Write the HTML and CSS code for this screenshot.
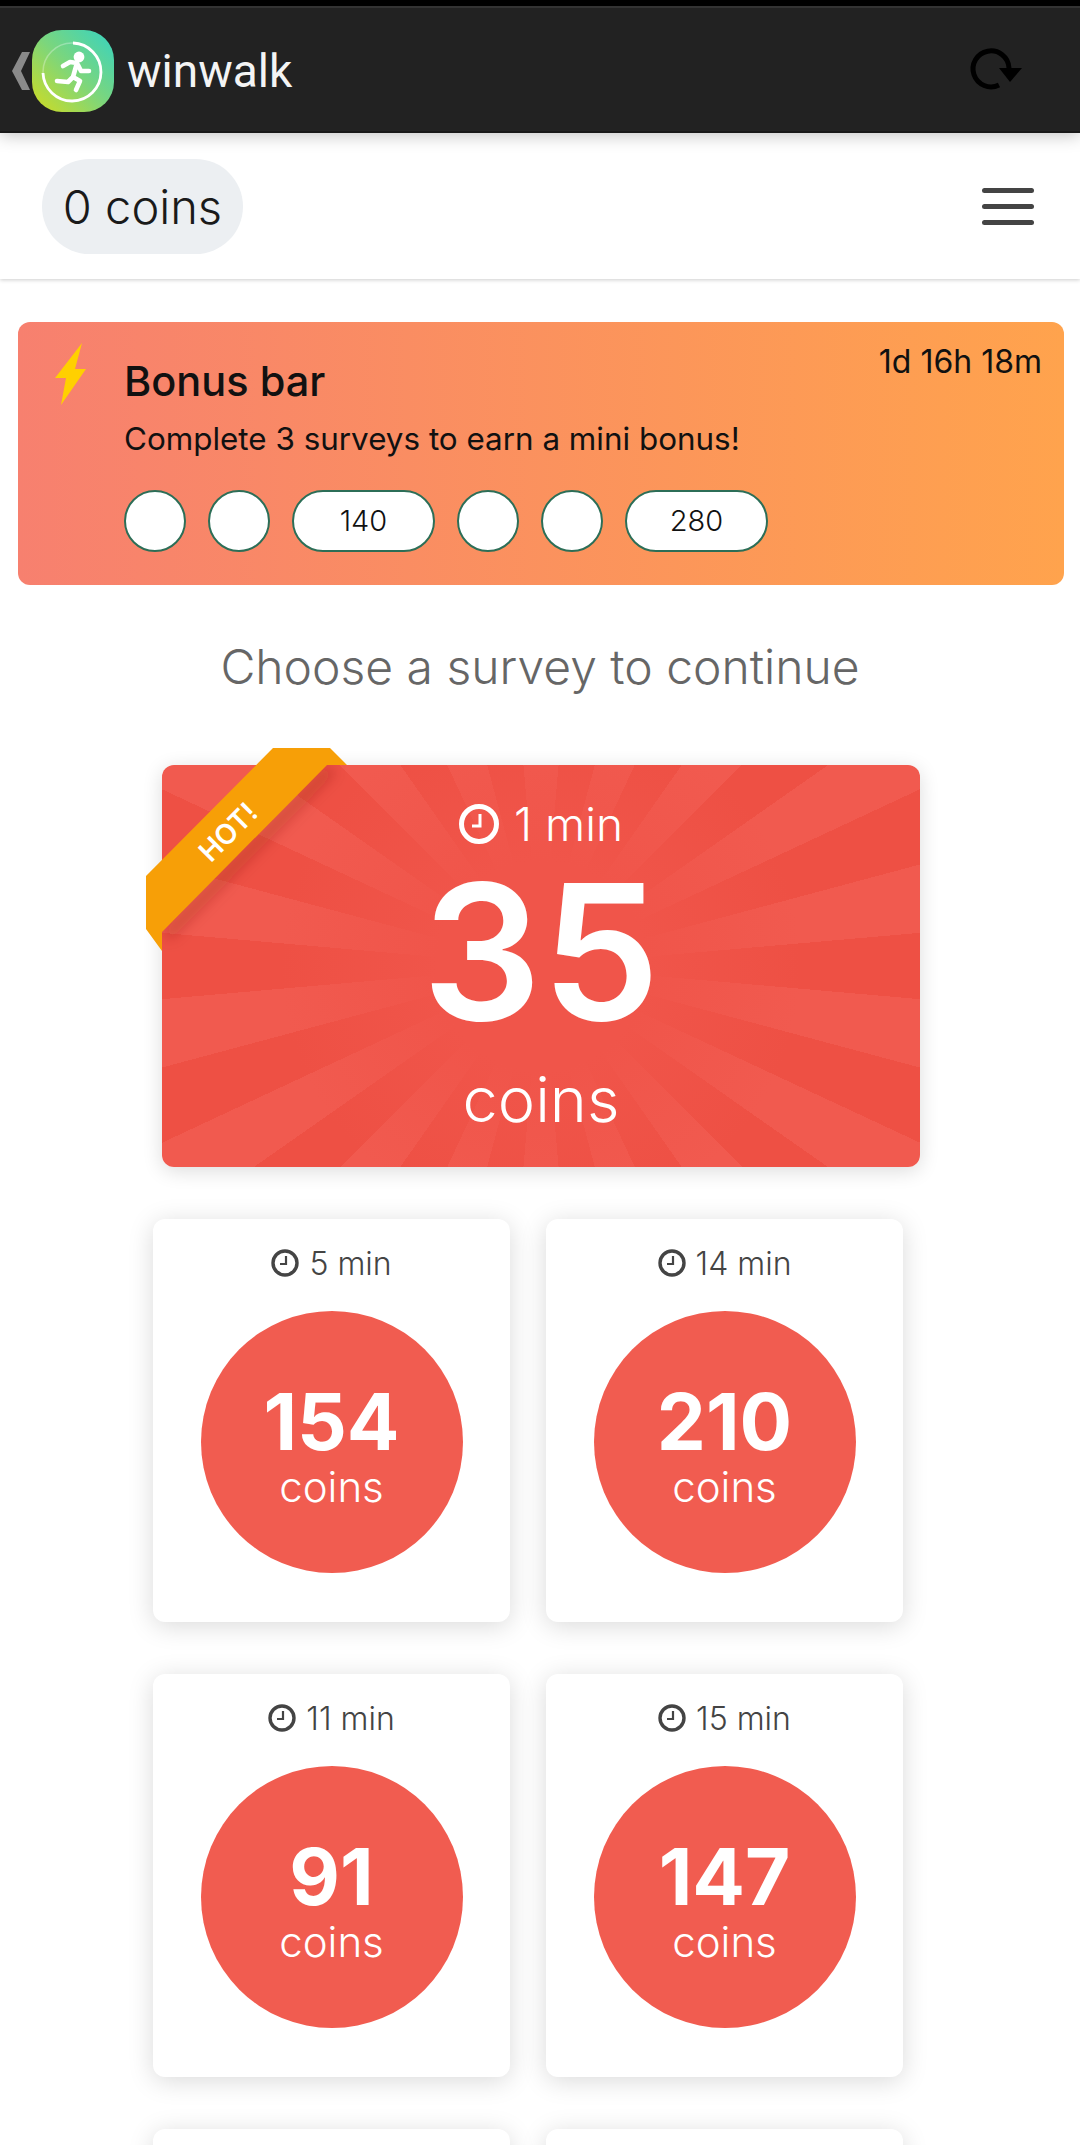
FILE: index.html
```html
<!DOCTYPE html>
<html lang="en">
<head>
    <meta charset="UTF-8">
    <meta name="viewport" content="width=device-width, initial-scale=1.0">
    <title>winwalk</title>
    <link rel="stylesheet" href="styles.css">
</head>
<body>
    <header class="appbar">
        <svg class="back" viewBox="0 0 18 38"><polygon points="18,0 9,19 18,38 10,38 0,19 10,0" fill="#8a8a8a"/></svg>
        <svg class="logo" viewBox="0 0 82 82">
            <defs>
                <linearGradient id="logoGrad" x1="1" y1="0" x2="0" y2="1">
                    <stop offset="0" stop-color="#36d3c2"/>
                    <stop offset=".5" stop-color="#7cd67c"/>
                    <stop offset="1" stop-color="#d3dc1e"/>
                </linearGradient>
            </defs>
            <rect width="82" height="82" rx="30" fill="url(#logoGrad)"/>
            <circle cx="40" cy="42" r="29" fill="none" stroke="#fff" stroke-opacity=".3" stroke-width="1.5"/>
            <path d="M41 13 A29 29 0 1 1 11 43" fill="none" stroke="#fff" stroke-width="2.8"/>
            <circle cx="47" cy="27" r="5.4" fill="#fff"/>
            <path d="M31 36 L38 32 L45 33 L41 47 L48 51 L44 60 M41 47 L36 52 L25 51 M46 35 L49 41 L57 41" fill="none" stroke="#fff" stroke-width="4.6" stroke-linecap="round" stroke-linejoin="round"/>
        </svg>
        <span class="brand">winwalk</span>
        <svg class="reload" viewBox="0 0 60 50">
            <path d="M43 22 A18 18 0 1 0 33 39" fill="none" stroke="#000" stroke-width="5"/>
            <polygon points="33,22 56,22 44,36" fill="#000"/>
        </svg>
    </header>

    <nav class="topnav">
        <div class="balance">0 coins</div>
        <div class="burger"><span></span><span></span><span></span></div>
    </nav>

    <section class="bonus">
        <svg class="bolt" viewBox="0 0 31 62"><polygon points="27,0 0,35 11,35 6,62 31,26 20,26" fill="#ffd000"/></svg>
        <div class="bonus-body">
            <h2>Bonus bar</h2>
            <p>Complete 3 surveys to earn a mini bonus!</p>
            <div class="steps">
                <span class="step"></span>
                <span class="step"></span>
                <span class="step wide">140</span>
                <span class="step"></span>
                <span class="step"></span>
                <span class="step wide">280</span>
            </div>
        </div>
        <div class="timer">1d 16h 18m</div>
    </section>

    <h1 class="choose">Choose a survey to continue</h1>

    <div class="hot">
        <svg class="ribbon" viewBox="0 0 202 204">
            <defs>
                <filter id="soft" x="-20%" y="-20%" width="140%" height="140%"><feGaussianBlur stdDeviation="7"/></filter>
                <clipPath id="cardClip"><rect x="16" y="17" width="186" height="187"/></clipPath>
            </defs>
            <g clip-path="url(#cardClip)">
                <polygon points="181,17 16,184 24,192 190,24" fill="#7a1a12" fill-opacity=".3" filter="url(#soft)"/>
            </g>
            <polygon points="127,0 184,0 201,17 181,17 16,184 16,203 0,181 0,128" fill="#f79f07"/>
            <text class="ribbon-text" x="82" y="94" transform="rotate(-45 82 84)" text-anchor="middle">HOT!</text>
        </svg>
        <div class="time time-hot">
            <svg class="clock-big" viewBox="0 0 40 40"><circle cx="20" cy="20" r="17.5" fill="none" stroke="#fff" stroke-width="5"/><path d="M21 10 V22 H13" fill="none" stroke="#fff" stroke-width="3"/></svg>
            1 min
        </div>
        <div class="hot-num">35</div>
        <div class="hot-unit">coins</div>
    </div>

    <div class="grid">
        <div class="card">
            <div class="time"><svg class="clock" viewBox="0 0 28 28"><circle cx="14" cy="14" r="12" fill="none" stroke="#444" stroke-width="3.4"/><path d="M15 7 V15 H9" fill="none" stroke="#444" stroke-width="2.2"/></svg>5 min</div>
            <div class="circle"><div class="num">154</div><div class="unit">coins</div></div>
        </div>
        <div class="card">
            <div class="time"><svg class="clock" viewBox="0 0 28 28"><circle cx="14" cy="14" r="12" fill="none" stroke="#444" stroke-width="3.4"/><path d="M15 7 V15 H9" fill="none" stroke="#444" stroke-width="2.2"/></svg>14 min</div>
            <div class="circle"><div class="num">210</div><div class="unit">coins</div></div>
        </div>
        <div class="card">
            <div class="time"><svg class="clock" viewBox="0 0 28 28"><circle cx="14" cy="14" r="12" fill="none" stroke="#444" stroke-width="3.4"/><path d="M15 7 V15 H9" fill="none" stroke="#444" stroke-width="2.2"/></svg>11 min</div>
            <div class="circle"><div class="num">91</div><div class="unit">coins</div></div>
        </div>
        <div class="card">
            <div class="time"><svg class="clock" viewBox="0 0 28 28"><circle cx="14" cy="14" r="12" fill="none" stroke="#444" stroke-width="3.4"/><path d="M15 7 V15 H9" fill="none" stroke="#444" stroke-width="2.2"/></svg>15 min</div>
            <div class="circle"><div class="num">147</div><div class="unit">coins</div></div>
        </div>
        <div class="card"></div>
        <div class="card"></div>
    </div>
</body>
</html>
```

FILE: styles.css
```css
html, body {
    height: 2145px;
    overflow: hidden;
}
body {
    margin: 0;
    background: #fff;
    font-family: Inter, "Liberation Sans", sans-serif;
    color: #111;
}
.appbar {
    height: 133px;
    box-sizing: border-box;
    display: flex;
    align-items: center;
    padding: 8px 0 4px 12px;
    background: #222;
    border-top: 6px solid #000;
    border-bottom: 2px solid #181818;
    position: relative;
    z-index: 2;
    box-shadow: inset 0 2px 0 #333, 0 2px 16px rgba(0, 0, 0, 0.25);
}
.back {
    width: 18px;
    height: 38px;
    margin-right: 2px;
}
.logo {
    width: 82px;
    height: 82px;
}
.brand {
    margin-left: 13px;
    font-family: Roboto, sans-serif;
    font-size: 46px;
    color: #f4f4f4;
}
.reload {
    width: 60px;
    height: 50px;
    margin-left: auto;
    margin-right: 54px;
}
.topnav {
    height: 146px;
    box-sizing: border-box;
    display: flex;
    align-items: center;
    justify-content: space-between;
    padding: 0 46px 0 42px;
    box-shadow: 0 1px 4px rgba(0, 0, 0, 0.2);
}
.balance {
    width: 201px;
    height: 95px;
    line-height: 95px;
    text-align: center;
    border-radius: 48px;
    background: #eceff2;
    font-size: 47px;
    font-weight: 300;
    color: #1a1a1a;
}
.burger {
    display: flex;
    flex-direction: column;
    gap: 11px;
}
.burger span {
    display: block;
    width: 52px;
    height: 5px;
    border-radius: 3px;
    background: #444;
}
.bonus {
    margin: 43px 16px 0 18px;
    height: 263px;
    box-sizing: border-box;
    display: flex;
    padding: 21px 22px 0 37px;
    border-radius: 12px;
    background: linear-gradient(90deg, #f7806f, #ffa34d);
}
.bolt {
    width: 31px;
    height: 62px;
    margin-right: 38px;
}
.bonus-body {
    flex: 1;
}
.bonus h2 {
    margin: 15px 0 0;
    font-size: 41.5px;
    line-height: 46px;
    font-weight: 500;
}
.bonus p {
    margin: 15px 0 0;
    font-size: 31.4px;
    line-height: 40px;
    font-weight: 400;
}
.steps {
    display: flex;
    gap: 22px;
    margin-top: 31px;
}
.step {
    width: 62px;
    height: 62px;
    box-sizing: border-box;
    border: 2px solid #2c6e57;
    border-radius: 31px;
    background: #fff;
    font-size: 29px;
    font-weight: 300;
    line-height: 58px;
    text-align: center;
}
.step.wide {
    width: 143px;
}
.timer {
    font-size: 32px;
    line-height: 36px;
    margin-top: 1px;
}
.choose {
    margin: 55px 0 0;
    text-align: center;
    font-size: 48px;
    line-height: 54px;
    font-weight: 300;
    color: #666;
}
.hot {
    position: relative;
    margin: 71px 0 0 162px;
    width: 758px;
    height: 402px;
    border-radius: 12px;
    color: #fff;
    text-align: center;
    background:
        radial-gradient(circle 260px at 50% 50%, #f0554a 40%, rgba(240, 85, 74, 0)),
        repeating-conic-gradient(from 5deg at 50% 50%, #ee5044 0 10deg, #f15a4f 10deg 20deg);
    box-shadow: 0 4px 20px rgba(0, 0, 0, 0.14);
}
.ribbon {
    position: absolute;
    left: -16px;
    top: -17px;
    width: 202px;
    height: 204px;
}
.ribbon-text {
    font-family: Inter, sans-serif;
    font-size: 28px;
    font-weight: 600;
    fill: #fff;
}
.time {
    display: flex;
    align-items: center;
    justify-content: center;
    gap: 10px;
    height: 38px;
    font-size: 32px;
    font-weight: 300;
    color: #444;
}
.time-hot {
    padding-top: 39px;
    height: 40px;
    gap: 15px;
    font-size: 46px;
    color: #fff;
}
.clock {
    width: 28px;
    height: 28px;
}
.clock-big {
    width: 40px;
    height: 40px;
}
.hot-num {
    margin-top: 33px;
    font-size: 188px;
    line-height: 150px;
    font-weight: 600;
}
.hot-unit {
    margin-top: 35px;
    font-size: 63px;
    line-height: 74px;
    font-weight: 300;
}
.grid {
    display: grid;
    grid-template-columns: 357px 357px;
    gap: 52px 36px;
    margin: 52px 0 0 153px;
}
.card {
    height: 403px;
    border-radius: 12px;
    background: #fff;
    padding-top: 25px;
    box-sizing: border-box;
    box-shadow: 0 4px 26px rgba(0, 0, 0, 0.15);
}
.circle {
    width: 262px;
    height: 262px;
    margin: 29px auto 0;
    border-radius: 50%;
    background: #f15c50;
    color: #fff;
    text-align: center;
}
.num {
    padding-top: 68px;
    font-size: 78px;
    line-height: 86px;
    font-weight: 700;
}
.unit {
    font-size: 42px;
    line-height: 44px;
    font-weight: 300;
}
```
